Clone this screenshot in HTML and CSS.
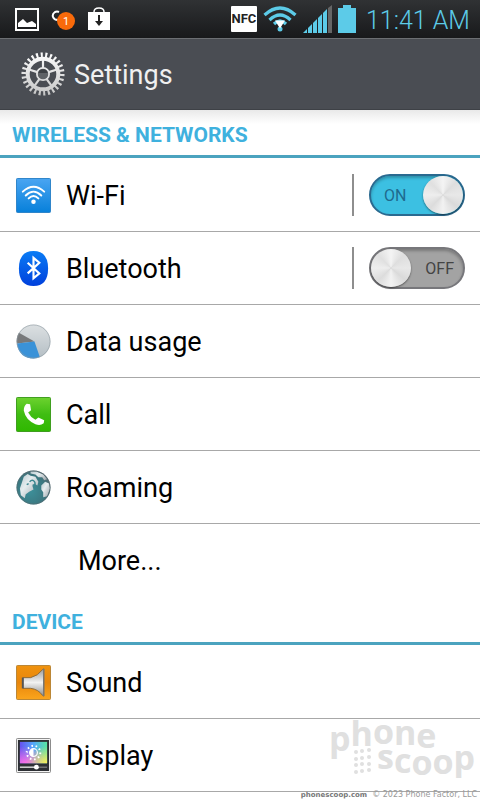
FILE: index.html
```
<!DOCTYPE html>
<html lang="en">
<head>
    <meta charset="UTF-8">
    <meta name="viewport" content="width=device-width, initial-scale=1.0">
    <title>Settings</title>
    <link rel="stylesheet" href="styles.css">
</head>
<body>
    <div class="statusbar">
        <div class="notifications">
            <svg width="24" height="23" viewBox="0 0 24 23">
                <rect x="1" y="1" width="22" height="21" fill="none" stroke="#fff" stroke-width="2"/>
                <path d="M3 19v-4l5-4 4 4 5-2 4 3v3z" fill="#fff"/>
            </svg>
            <svg width="24" height="24" viewBox="0 0 24 24">
                <path d="M8 5Q6 4 4 5 1 7 2 10t5 3" fill="none" stroke="#fff" stroke-width="2"/>
                <circle cx="15" cy="14" r="9" fill="#f96a0a"/>
                <text class="count" x="15" y="18">1</text>
            </svg>
            <svg width="24" height="24" viewBox="0 0 24 24">
                <path d="M7 6V5Q7 1 12 1t5 4v1" fill="none" stroke="#fff" stroke-width="1.500"/>
                <path d="M1 5h22v18H1z" fill="#fff"/>
                <path d="M12 8v7" stroke="#222" stroke-width="2"/>
                <path d="M8 14h8l-4 5z" fill="#222"/>
            </svg>
        </div>
        <div class="system">
            <span class="nfc">NFC</span>
            <svg width="34" height="26" viewBox="0 0 34 26">
                <g fill="none" stroke="#5ccbe8" stroke-width="3.200">
                    <path d="M1.500 9Q17-5 32.500 9"/>
                    <path d="M6.500 14Q17 4 27.500 14"/>
                    <path d="M11 18Q17 12 23 18"/>
                </g>
                <circle cx="17" cy="23" r="2.500" fill="#5ccbe8"/>
                <path d="M12 14.500h10l-5 8z" fill="#fff"/>
            </svg>
            <svg width="29" height="28" viewBox="0 0 29 28">
                <path d="M0 28l4-4v4zM5 28v-5l4-4v9zM10 28V18l4-4v14zM15 28V13l4-4v19zM20 28V8l4-4v24z" fill="#5ccbe8"/>
                <path d="M25 28V3l4-3v28z" fill="#666"/>
            </svg>
            <svg width="18" height="28" viewBox="0 0 18 28">
                <path d="M5 0h8v3h5v25H0V3h5z" fill="#5ccbe8"/>
            </svg>
            <span class="clock">11:41 AM</span>
        </div>
    </div>

    <header class="header">
        <svg width="44" height="44" viewBox="-22 -22 44 44">
            <defs>
                <linearGradient id="metal" x1="0" y1="-22" x2="0" y2="22" gradientUnits="userSpaceOnUse">
                    <stop offset="0" stop-color="#fff"/>
                    <stop offset="1" stop-color="#c4c4c4"/>
                </linearGradient>
            </defs>
            <g fill="none" stroke="url(#metal)">
                <circle r="18.800" stroke-width="5.500" pathLength="104" stroke-dasharray="1.800 2.200"/>
                <circle r="15.300" stroke-width="4"/>
                <circle r="6" stroke-width="2"/>
                <path stroke-width="2.200" d="M0-6V-14M5.700-1.900L13.300-4.300M3.500 4.900L8.200 11.300M-3.500 4.900L-8.200 11.300M-5.700-1.900L-13.300-4.300"/>
            </g>
            <circle r="5.200" fill="#5f6266"/>
            <path d="M-4.500-1A4.600 4.600 0 0 1 4.500-1z" fill="#3d4044"/>
        </svg>
        <h1>Settings</h1>
    </header>

    <main>
        <section class="first">
            <h2>WIRELESS &amp; NETWORKS</h2>
            <div class="row">
                <svg class="icon" viewBox="0 0 36 36">
                    <defs>
                        <linearGradient id="blue" x2="0" y2="1">
                            <stop offset="0" stop-color="#4aa5f2"/>
                            <stop offset="1" stop-color="#0780da"/>
                        </linearGradient>
                    </defs>
                    <rect x=".5" y=".5" width="35" height="35" rx="1" fill="url(#blue)" stroke="#2c83c8"/>
                    <g fill="none" stroke="#fff" stroke-width="2" stroke-linecap="round">
                        <path d="M7 14Q18 4 29 14"/>
                        <path d="M10 18Q18 10 26 18"/>
                        <path d="M13 21Q18 16 23 21"/>
                    </g>
                    <circle cx="18" cy="24.500" r="2.300" fill="#fff"/>
                </svg>
                <label class="name" for="wifi">Wi-Fi</label>
                <div class="switch">
                    <input type="checkbox" id="wifi" checked>
                    <span>ON</span>
                </div>
            </div>
            <div class="row">
                <svg class="icon" viewBox="0 0 36 36">
                    <defs>
                        <linearGradient id="bt" x2="0" y2="1">
                            <stop offset="0" stop-color="#0a7cf5"/>
                            <stop offset="1" stop-color="#0040dc"/>
                        </linearGradient>
                    </defs>
                    <path d="M18 0Q33 0 33 18T18 36Q3 36 3 18T18 0z" fill="url(#bt)"/>
                    <path d="M12 12l12 11-6 5V7l6 5-12 11" fill="none" stroke="#fff" stroke-width="2.200"/>
                </svg>
                <label class="name" for="bluetooth">Bluetooth</label>
                <div class="switch">
                    <input type="checkbox" id="bluetooth">
                    <span>OFF</span>
                </div>
            </div>
            <a class="row" href="#data">
                <svg class="icon" viewBox="0 0 36 36">
                    <defs>
                        <linearGradient id="pie" x2="0" y2="1">
                            <stop offset="0" stop-color="#dce0e2"/>
                            <stop offset="1" stop-color="#b4bec4"/>
                        </linearGradient>
                    </defs>
                    <circle cx="18" cy="18" r="17.500" fill="url(#pie)"/>
                    <path d="M19 18L3 9Q0 14 1 20z" fill="#77797b"/>
                    <path d="M19 18L1 20Q3 35 18 35.500 21 35.500 24.500 34z" fill="#3a92d8"/>
                    <circle cx="18" cy="18" r="17" fill="none" stroke="#8f9ba2" stroke-opacity=".6"/>
                </svg>
                <span class="name">Data usage</span>
            </a>
            <a class="row" href="#call">
                <svg class="icon" viewBox="0 0 36 36">
                    <defs>
                        <linearGradient id="green" x2="0" y2="1">
                            <stop offset="0" stop-color="#6dd22f"/>
                            <stop offset=".5" stop-color="#3fbd12"/>
                            <stop offset="1" stop-color="#2fb800"/>
                        </linearGradient>
                    </defs>
                    <rect x=".5" y=".5" width="35" height="35" rx="1" fill="url(#green)" stroke="#3c9c1c"/>
                    <path d="M11 7l3.500 0.500 1 6-3 2.500Q15 21 20 23.500l3-2.500 6 3-.5 3Q25 30 20 28 10 24 8 14 8 9 11 7z" fill="#fff"/>
                </svg>
                <span class="name">Call</span>
            </a>
            <a class="row" href="#roaming">
                <svg class="icon" viewBox="0 0 36 36">
                    <defs>
                        <radialGradient id="sea" cx=".4" cy=".6" r=".65">
                            <stop offset="0" stop-color="#3d909a"/>
                            <stop offset=".7" stop-color="#3b7780"/>
                            <stop offset="1" stop-color="#56686f"/>
                        </radialGradient>
                        <linearGradient id="land" x2="1" y2="1">
                            <stop offset="0" stop-color="#b9c9ce"/>
                            <stop offset=".4" stop-color="#e6edef"/>
                            <stop offset="1" stop-color="#9aa2a8"/>
                        </linearGradient>
                    </defs>
                    <circle cx="18" cy="18" r="17.500" fill="url(#sea)"/>
                    <g fill="url(#land)">
                        <path d="M8 7l4-3 3 2 5 1 3 5-1 4-3-2-2 3 1 3-4 2-4 3-1 4-4-3-1-7 2-6z"/>
                        <path d="M15 1.500l6 0 7 3 4 5-3 1-2-3-4 0-3-3-5-1z"/>
                        <path d="M26 16l4-4 4 2 1 5-3 8-4 1 0-5-2-3z"/>
                    </g>
                    <path d="M14 12q3-3 5 0t-2 4M11 15l2-1" fill="none" stroke="#3b8790" stroke-width="1.500"/>
                    <circle cx="18" cy="18" r="17" fill="none" stroke="#5c6a70" stroke-opacity=".6"/>
                </svg>
                <span class="name">Roaming</span>
            </a>
            <a class="row more" href="#more"><span class="name">More...</span></a>
        </section>

        <section>
            <h2>DEVICE</h2>
            <a class="row" href="#sound">
                <svg class="icon" viewBox="0 0 36 36">
                    <defs>
                        <linearGradient id="orange" x2="0" y2="1">
                            <stop offset="0" stop-color="#f0930f"/>
                            <stop offset=".5" stop-color="#e8860c"/>
                            <stop offset="1" stop-color="#fba51c"/>
                        </linearGradient>
                        <linearGradient id="cone" x2="0" y2="1">
                            <stop offset="0" stop-color="#9a9a9a"/>
                            <stop offset=".5" stop-color="#f2f2f2"/>
                            <stop offset="1" stop-color="#8d8d8d"/>
                        </linearGradient>
                    </defs>
                    <rect x=".5" y=".5" width="35" height="35" rx="1" fill="url(#orange)" stroke="#b98434"/>
                    <path d="M7 13h8q8-2 12-8l1.500-1v28l-1.500-1q-4-6-12-7H7z" fill="url(#cone)" stroke="#8a6a3c"/>
                    <path d="M7 13v11" stroke="#555" stroke-width="2"/>
                    <path d="M28.500 4v28" stroke="#777" stroke-width="1.500"/>
                </svg>
                <span class="name">Sound</span>
            </a>
            <a class="row" href="#display">
                <svg class="icon" viewBox="0 0 36 36">
                    <defs>
                        <radialGradient id="yellow" cx="1" cy="1" r=".8">
                            <stop offset="0" stop-color="#ffee58"/>
                            <stop offset="1" stop-color="#ffee58" stop-opacity="0"/>
                        </radialGradient>
                        <radialGradient id="pink" cx=".2" cy="1" r=".8">
                            <stop offset="0" stop-color="#ff6ee6"/>
                            <stop offset="1" stop-color="#ff6ee6" stop-opacity="0"/>
                        </radialGradient>
                        <linearGradient id="sky">
                            <stop offset="0" stop-color="#6650f0"/>
                            <stop offset=".5" stop-color="#54a8fa"/>
                            <stop offset="1" stop-color="#58e6a0"/>
                        </linearGradient>
                    </defs>
                    <rect x=".5" y=".5" width="35" height="35" rx="1" fill="#f4f4f4" stroke="#888"/>
                    <path d="M2 2h32v32H2z" fill="#2d3034"/>
                    <path d="M4 4h28v22H4z" fill="url(#sky)"/>
                    <path d="M4 4h28v22H4z" fill="url(#pink)"/>
                    <path d="M4 4h28v22H4z" fill="url(#yellow)"/>
                    <circle cx="18" cy="15" r="7" fill="none" stroke="#fff" stroke-width="2" pathLength="40" stroke-dasharray="1.500 2.500"/>
                    <circle cx="18" cy="15" r="4" fill="none" stroke="#fff" stroke-width="1.200"/>
                    <path d="M18 11a4 4 0 0 0 0 8z" fill="#fff"/>
                    <path d="M4 30h28" stroke="#999"/>
                    <path d="M4 30h16" stroke="#fff"/>
                    <circle cx="21" cy="30" r="2.500" fill="#fff"/>
                </svg>
                <span class="name">Display</span>
            </a>
        </section>
    </main>

    <footer class="credit">
        <svg class="logo" width="148" height="74" viewBox="0 0 148 74">
            <text x="0" y="35 30 28 29 32">phone</text>
            <text x="48" y="53 57 59 58 54">scoop</text>
            <g>
                <circle cx="27" cy="36" r="2"/><circle cx="33" cy="35" r="2"/><circle cx="40" cy="34" r="2"/>
                <circle cx="27" cy="43" r="2"/><circle cx="33" cy="42" r="2"/><circle cx="40" cy="41" r="2"/>
                <circle cx="27" cy="49" r="2"/><circle cx="33" cy="48" r="2"/><circle cx="40" cy="48" r="2"/>
                <circle cx="27" cy="56" r="2"/><circle cx="33" cy="55" r="2"/><circle cx="40" cy="54" r="2"/>
            </g>
        </svg>
        <div class="copyright"><b>phonescoop.com</b><span>© 2023 Phone Factor, LLC</span></div>
    </footer>
</body>
</html>
```
FILE: styles.css
```
* {
    box-sizing: border-box;
}

body {
    margin: 0;
    min-height: 100vh;
    position: relative;
    overflow-x: hidden;
    background-color: #fff;
    color: #000;
    font-family: Roboto, "Liberation Sans", sans-serif;
}

svg {
    display: block;
    flex: none;
}

/* status bar */
.statusbar {
    display: flex;
    justify-content: space-between;
    align-items: center;
    height: 38px;
    padding: 0 10px 0 15px;
    background: linear-gradient(#303234, #18191b);
}

.notifications {
    display: flex;
    align-items: center;
    gap: 12px;
}

.count {
    fill: #fff;
    font-size: 11px;
    text-anchor: middle;
}

.system {
    display: flex;
    align-items: center;
    gap: 6px;
}

.nfc {
    width: 26px;
    line-height: 26px;
    border-radius: 1px;
    background-color: #fff;
    color: #222;
    font-size: 13px;
    font-weight: bold;
    text-align: center;
}

.clock {
    margin-left: 4px;
    padding-top: 2px;
    color: #5ccbe8;
    font-size: 25px;
    font-weight: 300;
}

/* title */
.header {
    display: flex;
    align-items: center;
    gap: 9px;
    height: 72px;
    padding: 0 21px;
    border-top: 1px solid #6c6f73;
    border-bottom: 1px solid #3e4146;
    background-color: #4a4d53;
}

.header h1 {
    margin: 0;
    padding-top: 2px;
    color: #f0f0f0;
    font-size: 27px;
    font-weight: normal;
}

/* list */
.first {
    background: linear-gradient(#e9e9e9, #fff 14px);
}

h2 {
    height: 48px;
    margin: 0 0 1px;
    padding: 0 12px;
    border-bottom: 3px solid #4ba3bf;
    color: #3fb1de;
    font-size: 21px;
    font-weight: bold;
    line-height: 50px;
}

.row {
    display: flex;
    align-items: center;
    gap: 15px;
    height: 73px;
    padding: 0 15px 0 16px;
    border-bottom: 1px solid #a8a8a8;
    color: #000;
    font-size: 27px;
    text-decoration: none;
}

.icon {
    width: 35px;
    height: 35px;
}

.name {
    flex: 1;
    padding-top: 2px;
}

.more {
    padding-left: 78px;
    border-bottom-color: transparent;
}

/* on/off switch */
.switch {
    display: grid;
    align-items: center;
    padding-left: 15px;
    border-left: 2px solid #8e8e8e;
}

.switch input,
.switch span {
    grid-area: 1 / 1;
}

.switch input {
    appearance: none;
    width: 96px;
    height: 42px;
    margin: 0;
    padding: 0;
    border: 2px solid #77777b;
    border-radius: 21px;
    background-color: #a3a3a3;
    box-shadow: inset 0 2px 3px rgba(0, 0, 0, 0.25);
}

.switch input::before {
    content: '';
    display: block;
    width: 40px;
    height: 38px;
    border-radius: 50%;
    background: conic-gradient(#f4f4f4, #dedede 45deg, #e8e8e8 90deg, #dadada 130deg, #f2f2f2 180deg, #dcdcdc 225deg, #eee 270deg, #e0e0e0 315deg, #f4f4f4);
    box-shadow: 0 1px 2px rgba(0, 0, 0, 0.5);
}

.switch input:checked {
    border-color: #2a6a90;
    background-color: #3cc0e2;
}

.switch input:checked::before {
    margin-left: auto;
}

.switch span {
    justify-self: end;
    padding-right: 11px;
    color: #444;
    font-size: 16px;
    pointer-events: none;
}

.switch input:checked + span {
    justify-self: start;
    padding: 0 0 0 15px;
    color: #1f6a8e;
}

/* watermark */
.credit {
    position: absolute;
    right: 3px;
    bottom: 0;
    pointer-events: none;
}

.logo {
    margin-left: auto;
    fill: #e0e0e0;
    font-family: "Open Sans", sans-serif;
    font-size: 34px;
    font-weight: bold;
}

.copyright {
    display: flex;
    gap: 5px;
    color: #999;
    font-family: "DejaVu Sans", sans-serif;
    font-size: 8px;
    line-height: 10px;
}

.copyright b {
    color: #777;
    font-size: 7px;
}
```
